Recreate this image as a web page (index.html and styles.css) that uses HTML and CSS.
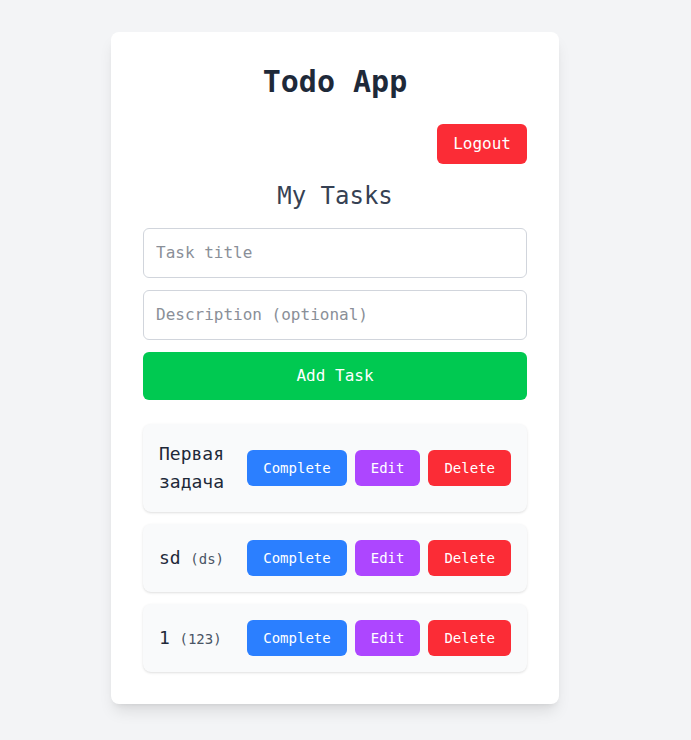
FILE: index.html
```
<!DOCTYPE html>
<html lang="en">
<head>
<meta charset="utf-8">
<title>Todo App</title>
<link rel="stylesheet" href="styles.css">
</head>
<body>
<main class="card">
  <h1 class="title">Todo App</h1>
  <div class="toolbar">
    <button class="btn btn-logout">Logout</button>
  </div>
  <h2 class="subtitle">My Tasks</h2>
  <form class="task-form">
    <input class="field" type="text" placeholder="Task title">
    <input class="field" type="text" placeholder="Description (optional)">
    <button type="button" class="btn btn-add">Add Task</button>
  </form>
  <ul class="task-list">
    <li class="task">
      <div class="task-text"><span class="task-title">Первая задача</span></div>
      <div class="actions">
        <button class="btn-sm btn-complete">Complete</button>
        <button class="btn-sm btn-edit">Edit</button>
        <button class="btn-sm btn-delete">Delete</button>
      </div>
    </li>
    <li class="task">
      <div class="task-text"><span class="task-title">sd</span> <span class="task-desc">(ds)</span></div>
      <div class="actions">
        <button class="btn-sm btn-complete">Complete</button>
        <button class="btn-sm btn-edit">Edit</button>
        <button class="btn-sm btn-delete">Delete</button>
      </div>
    </li>
    <li class="task">
      <div class="task-text"><span class="task-title">1</span> <span class="task-desc">(123)</span></div>
      <div class="actions">
        <button class="btn-sm btn-complete">Complete</button>
        <button class="btn-sm btn-edit">Edit</button>
        <button class="btn-sm btn-delete">Delete</button>
      </div>
    </li>
  </ul>
</main>
</body>
</html>
```

FILE: styles.css
```
* { box-sizing: border-box; }

html, body {
  margin: 0;
  padding: 0;
}

body {
  background: #f3f4f6;
  font-family: "DejaVu Sans Mono", "Liberation Mono", monospace;
  color: #1e2939;
  min-height: 740px;
  padding-top: 32px;
}

.card {
  width: 448px;
  margin-left: 111px;
  background: #ffffff;
  border-radius: 8px;
  padding: 32px;
  box-shadow: 0 10px 15px -3px rgba(0,0,0,0.1), 0 4px 6px -4px rgba(0,0,0,0.1);
}

.title {
  margin: 0 0 24px;
  text-align: center;
  font-size: 30px;
  line-height: 36px;
  font-weight: bold;
  color: #1e2939;
}

.toolbar {
  display: flex;
  justify-content: flex-end;
  margin-bottom: 16px;
}

.btn {
  border: none;
  font-family: inherit;
  font-size: 16px;
  line-height: 24px;
  color: #ffffff;
  border-radius: 6px;
  cursor: pointer;
}

.btn-logout {
  background: #fb2c36;
  padding: 8px 16px;
}

.subtitle {
  margin: 0 0 16px;
  text-align: center;
  font-size: 24px;
  line-height: 32px;
  font-weight: normal;
  color: #364153;
}

.task-form {
  display: flex;
  flex-direction: column;
  gap: 12px;
}

.field {
  width: 100%;
  padding: 12px;
  border: 1px solid #d1d5dc;
  border-radius: 6px;
  font-family: inherit;
  font-size: 16px;
  line-height: 24px;
  color: #1e2939;
  background: #fff;
  outline: none;
}

.field::placeholder {
  color: #8a8f98;
}

.btn-add {
  width: 100%;
  padding: 12px 16px;
  background: #00c951;
}

.task-list {
  list-style: none;
  margin: 24px 0 0;
  padding: 0;
  display: flex;
  flex-direction: column;
  gap: 12px;
}

.task {
  display: flex;
  align-items: center;
  justify-content: space-between;
  gap: 8px;
  padding: 16px;
  background: #f9fafb;
  border-radius: 8px;
  box-shadow: 0 1px 3px 0 rgba(0,0,0,0.1), 0 1px 2px -1px rgba(0,0,0,0.1);
}

.task-text {
  flex: 1 1 auto;
  min-width: 0;
}

.task-title {
  font-size: 18px;
  line-height: 28px;
  color: #1e2939;
}

.task-desc {
  font-size: 14px;
  line-height: 20px;
  color: #4a5565;
}

.actions {
  display: flex;
  gap: 8px;
  flex: 0 0 auto;
}

.btn-sm {
  border: none;
  font-family: inherit;
  font-size: 14px;
  line-height: 20px;
  padding: 8px 16px;
  color: #ffffff;
  border-radius: 6px;
  cursor: pointer;
}

.btn-complete { background: #2b7fff; }
.btn-edit { background: #ad46ff; }
.btn-delete { background: #fb2c36; }
```
